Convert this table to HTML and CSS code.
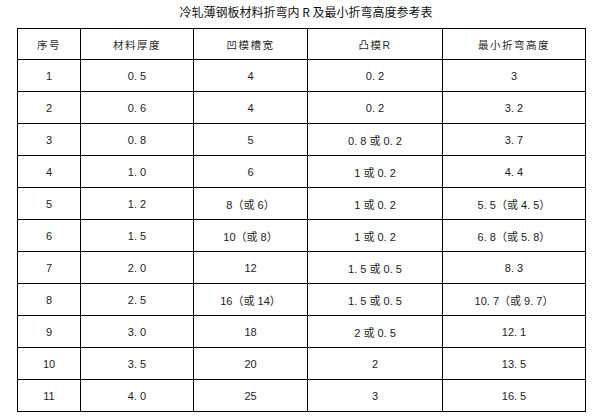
FILE: index.html
```html
<!DOCTYPE html>
<html lang="zh">
<head>
<meta charset="utf-8">
<link rel="stylesheet" href="styles.css">
</head>
<body>
<div class="title">冷轧薄钢板材料折弯内 R 及最小折弯高度参考表</div>
<div class="table">
  <div class="cell head">序号</div><div class="cell head">材料厚度</div><div class="cell head">凹模槽宽</div><div class="cell head">凸模R</div><div class="cell head">最小折弯高度</div>
  <div class="cell">1</div><div class="cell">0. 5</div><div class="cell">4</div><div class="cell">0. 2</div><div class="cell">3</div>
  <div class="cell">2</div><div class="cell">0. 6</div><div class="cell">4</div><div class="cell">0. 2</div><div class="cell">3. 2</div>
  <div class="cell">3</div><div class="cell">0. 8</div><div class="cell">5</div><div class="cell">0. 8 或 0. 2</div><div class="cell">3. 7</div>
  <div class="cell">4</div><div class="cell">1. 0</div><div class="cell">6</div><div class="cell">1 或 0. 2</div><div class="cell">4. 4</div>
  <div class="cell">5</div><div class="cell">1. 2</div><div class="cell">8（或 6）</div><div class="cell">1 或 0. 2</div><div class="cell">5. 5（或 4. 5）</div>
  <div class="cell">6</div><div class="cell">1. 5</div><div class="cell">10（或 8）</div><div class="cell">1 或 0. 2</div><div class="cell">6. 8（或 5. 8）</div>
  <div class="cell">7</div><div class="cell">2. 0</div><div class="cell">12</div><div class="cell">1. 5 或 0. 5</div><div class="cell">8. 3</div>
  <div class="cell">8</div><div class="cell">2. 5</div><div class="cell">16（或 14）</div><div class="cell">1. 5 或 0. 5</div><div class="cell">10. 7（或 9. 7）</div>
  <div class="cell">9</div><div class="cell">3. 0</div><div class="cell">18</div><div class="cell">2 或 0. 5</div><div class="cell">12. 1</div>
  <div class="cell">10</div><div class="cell">3. 5</div><div class="cell">20</div><div class="cell">2</div><div class="cell">13. 5</div>
  <div class="cell">11</div><div class="cell">4. 0</div><div class="cell">25</div><div class="cell">3</div><div class="cell">16. 5</div>
</div>
</body>
</html>
```

FILE: styles.css
```css
html, body {
  margin: 0;
  padding: 0;
  background: #fff;
}
body {
  font-family: "Liberation Sans", "Noto Sans CJK SC", sans-serif;
  color: #1c1c1c;
}
.title {
  height: 28px;
  line-height: 24px;
  font-size: 12px;
  text-align: center;
  color: #111;
  font-family: "Noto Sans CJK SC", sans-serif;
}
.table {
  margin-left: 17px;
  width: 569px;
  box-sizing: border-box;
  display: grid;
  grid-template-columns: 63px 113px 114px 135px 143px;
  grid-template-rows: 31px;
  grid-auto-rows: 32px;
  border-left: 1px solid #000;
  border-top: 1px solid #000;
}
.cell {
  box-sizing: border-box;
  border-right: 1px solid #000;
  border-bottom: 1px solid #000;
  display: flex;
  align-items: center;
  justify-content: center;
  font-size: 11px;
  white-space: pre;
}
.head {
  letter-spacing: 1.5px;
  font-size: 10.5px;
  color: #2a2a2a;
}
```
